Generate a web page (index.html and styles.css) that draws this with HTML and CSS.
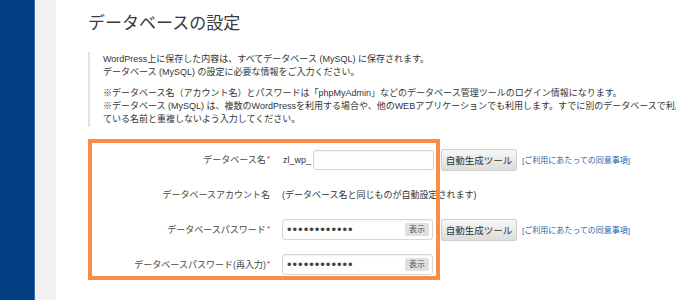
FILE: index.html
```html
<!DOCTYPE html>
<html lang="ja">
<head>
    <meta charset="UTF-8">
    <meta name="viewport" content="width=device-width, initial-scale=1.0">
    <title>データベースの設定</title>
    <link rel="stylesheet" href="styles.css">
</head>
<body>
    <div class="page">
        <aside class="sidebar"></aside>
        <div class="content-area">
            <main class="main">
                <h1 class="title">データベースの設定</h1>

                <div class="notice">
                    <p>WordPress上に保存した内容は、すべてデータベース (MySQL) に保存されます。<br>データベース (MySQL) の設定に必要な情報をご入力ください。</p>
                    <p>※データベース名（アカウント名）とパスワードは「phpMyAdmin」などのデータベース管理ツールのログイン情報になります。<br>※データベース (MySQL) は、複数のWordPressを利用する場合や、他のWEBアプリケーションでも利用します。すでに別のデータベースで利用し<br>ている名前と重複しないよう入力してください。</p>
                </div>

                <div class="db-form">
                    <div class="highlight"></div>

                    <div class="row">
                        <label class="row-label" for="dbName">データベース名<span class="req">*</span></label>
                        <div class="row-value">
                            <span class="prefix">zl_wp_</span>
                            <input class="text-input" type="text" id="dbName">
                            <button class="btn" id="genName">自動生成ツール</button>
                            <a class="terms" href="#">[ご利用にあたっての同意事項]</a>
                        </div>
                    </div>

                    <div class="row">
                        <label class="row-label">データベースアカウント名</label>
                        <div class="row-value">
                            <span class="note">(データベース名と同じものが自動設定されます)</span>
                        </div>
                    </div>

                    <div class="row">
                        <label class="row-label" for="dbPass">データベースパスワード<span class="req">*</span></label>
                        <div class="row-value">
                            <div class="pw-field">
                                <input class="pw-input" type="password" id="dbPass" value="abcdefghijkl">
                                <button class="reveal">表示</button>
                            </div>
                            <button class="btn btn-pw" id="genPass">自動生成ツール</button>
                            <a class="terms" href="#">[ご利用にあたっての同意事項]</a>
                        </div>
                    </div>

                    <div class="row">
                        <label class="row-label" for="dbPass2">データベースパスワード(再入力)<span class="req">*</span></label>
                        <div class="row-value">
                            <div class="pw-field">
                                <input class="pw-input" type="password" id="dbPass2" value="abcdefghijkl">
                                <button class="reveal">表示</button>
                            </div>
                        </div>
                    </div>
                </div>
            </main>
        </div>
    </div>
</body>
</html>
```

FILE: styles.css
```css
body {
    margin: 0;
    overflow: hidden;
    font-family: "Liberation Sans", "Noto Sans CJK JP", sans-serif;
    color: #333;
    background-color: #fff;
}
.page {
    display: flex;
    height: 100vh;
}
.sidebar {
    width: 35px;
    flex-shrink: 0;
    background-color: #023d82;
    border-right: 1px solid #3c6aa3;
    box-sizing: border-box;
}
.content-area {
    flex: 1;
    padding-left: 21px;
    background-color: #f1f1f1;
    display: flex;
}
.main {
    flex: 1;
    background-color: #fff;
    padding: 14px 0 0 32px;
}
.title {
    margin: 0 0 18px;
    font-size: 17px;
    line-height: 20px;
    font-weight: normal;
    color: #3a3a3a;
}
.notice {
    border-left: 2px solid #e2e2e2;
    padding: 1px 0 1px 13px;
    font-size: 9px;
    line-height: 13px;
    white-space: nowrap;
}
.notice p {
    margin: 0;
}
.notice p + p {
    margin-top: 8px;
}

.db-form {
    position: relative;
    margin-top: 15px;
    font-size: 9px;
}
.highlight {
    position: absolute;
    left: 0;
    top: -3px;
    width: 352px;
    height: 141px;
    border: 4px solid #fb8b45;
    box-sizing: border-box;
    pointer-events: none;
    z-index: 2;
}
.row {
    display: flex;
    align-items: center;
    height: 35px;
}
.row-label {
    width: 194px;
    flex-shrink: 0;
    padding-right: 12px;
    box-sizing: border-box;
    text-align: right;
    color: #444;
}
.req {
    color: #d22;
    font-size: 8px;
    vertical-align: 2px;
    margin-left: 1px;
}
.row-value {
    display: flex;
    align-items: center;
}
.prefix {
    margin-left: 1px;
}
.note {
    color: #333;
}
.text-input {
    width: 121px;
    height: 20px;
    margin-left: 2px;
    box-sizing: border-box;
    border: 1px solid #d6d6d6;
    border-radius: 3px;
    box-shadow: inset 0 1px 2px rgba(0, 0, 0, 0.06);
    outline: none;
}
.btn {
    margin-left: 7px;
    width: 76px;
    height: 22px;
    padding: 0;
    font: inherit;
    font-size: 9.5px;
    color: #333;
    border: 1px solid #cfcfcf;
    border-radius: 2px;
    background: linear-gradient(#f7f7f7, #dcdcdc);
}
.btn-pw {
    margin-left: 8px;
}
.terms {
    margin-left: 5px;
    font-size: 8px;
    color: #2563ad;
    text-decoration: none;
}
.pw-field {
    display: flex;
    align-items: center;
    width: 151px;
    height: 21px;
    box-sizing: border-box;
    padding: 0 3px 0 4px;
    border: 1px solid #d6d6d6;
    border-radius: 3px;
    box-shadow: inset 0 1px 2px rgba(0, 0, 0, 0.06);
}
.pw-input {
    flex: 1;
    min-width: 0;
    padding: 0;
    border: 0;
    outline: none;
    background: transparent;
    font-family: "Liberation Sans", sans-serif;
    font-size: 13px;
    letter-spacing: 1px;
    color: #444;
}
.reveal {
    height: 13px;
    padding: 0 4px;
    border: 0;
    border-radius: 2px;
    background-color: #e0e0e0;
    font: inherit;
    font-size: 8px;
    line-height: 13px;
    color: #555;
}
```
